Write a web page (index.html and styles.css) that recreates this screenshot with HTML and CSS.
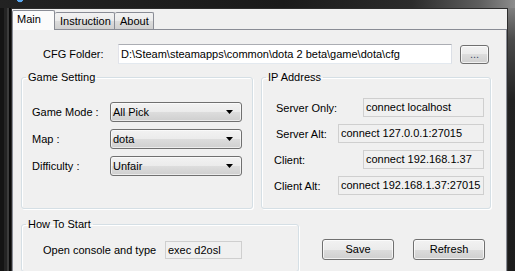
FILE: index.html
```html
<!DOCTYPE html>
<html>
<head>
<meta charset="utf-8">
<link rel="stylesheet" href="styles.css">
</head>
<body>
<div class="window">
  <div class="client">
    <div class="tabs">
      <div class="tab active">Main</div>
      <div class="tab">Instruction</div>
      <div class="tab">About</div>
    </div>
    <div class="page">
      <div class="cfg-row">
        <span class="cfg-label">CFG Folder:</span>
        <div class="textbox cfg-path">D:\Steam\steamapps\common\dota 2 beta\game\dota\cfg</div>
        <div class="btn btn-browse">...</div>
      </div>
      <div class="groups">
        <fieldset class="group game">
          <legend>Game Setting</legend>
          <div class="group-body game-body">
            <div class="field-row">
              <span class="flabel">Game Mode :</span>
              <div class="combo"><span>All Pick</span><svg class="arrow" width="7" height="4" viewBox="0 0 7 4"><path d="M0 0H7L3.5 4Z"/></svg></div>
            </div>
            <div class="field-row">
              <span class="flabel">Map :</span>
              <div class="combo"><span>dota</span><svg class="arrow" width="7" height="4" viewBox="0 0 7 4"><path d="M0 0H7L3.5 4Z"/></svg></div>
            </div>
            <div class="field-row">
              <span class="flabel">Difficulty :</span>
              <div class="combo"><span>Unfair</span><svg class="arrow" width="7" height="4" viewBox="0 0 7 4"><path d="M0 0H7L3.5 4Z"/></svg></div>
            </div>
          </div>
        </fieldset>
        <fieldset class="group ip">
          <legend>IP Address</legend>
          <div class="group-body ip-body">
            <div class="ip-row">
              <span class="ilabel">Server Only:</span>
              <div class="rbox short">connect localhost</div>
            </div>
            <div class="ip-row">
              <span class="ilabel">Server Alt:</span>
              <div class="rbox long">connect 127.0.0.1:27015</div>
            </div>
            <div class="ip-row">
              <span class="ilabel alt">Client:</span>
              <div class="rbox short">connect 192.168.1.37</div>
            </div>
            <div class="ip-row">
              <span class="ilabel alt">Client Alt:</span>
              <div class="rbox long">connect 192.168.1.37:27015</div>
            </div>
          </div>
        </fieldset>
      </div>
      <div class="bottom-row">
        <fieldset class="group start">
          <legend>How To Start</legend>
          <div class="group-body start-body">
            <span class="slabel">Open console and type</span>
            <div class="rbox cmd">exec d2osl</div>
          </div>
        </fieldset>
        <div class="actions">
          <div class="btn action">Save</div>
          <div class="btn action">Refresh</div>
        </div>
      </div>
    </div>
  </div>
</div>
</body>
</html>
```

FILE: styles.css
```css
* { box-sizing: border-box; }

html, body {
  margin: 0;
  padding: 0;
}

body {
  width: 515px;
  height: 271px;
  overflow: hidden;
  background: #1a1a1a;
  font-family: "Liberation Sans", Arial, sans-serif;
  font-size: 11px;
  color: #000;
}

.window {
  height: 271px;
  display: flex;
  flex-direction: column;
  padding: 8px 7px 0 11px;
  background:
    radial-gradient(circle at 20px -1px, #5aa8f0 0 3px, transparent 3.6px),
    linear-gradient(90deg, #222 0%, #1a1a1a 55%, #2c2c2c 80%, #5e5e5e 93%, #8c8c8c 100%) top / 100% 8px no-repeat,
    linear-gradient(90deg, #141414 0 4px, #242424 4px 7px, #3c3c3c 7px 9px, #0a0a0a 9px 11px) left / 11px 100% no-repeat,
    linear-gradient(180deg, #8c8c8c 0, #4a4a4a 40px, #222 100px, #1c1c1c 100%) right / 7px 100% no-repeat,
    #1a1a1a;
}

.client {
  flex: 1;
  display: flex;
  flex-direction: column;
  background: #f0f0f0;
  border: 1px solid #2c2c2c;
  border-bottom: 0;
  padding-top: 1px;
  overflow: hidden;
}

/* Tabs */
.tabs {
  display: flex;
  align-items: flex-end;
  height: 19px;
  position: relative;
  z-index: 1;
}

.tab {
  height: 17px;
  padding: 0 5px;
  border: 1px solid #898c95;
  border-bottom: 0;
  border-left-width: 0;
  background: linear-gradient(#f2f2f2 0%, #ebebeb 50%, #dddddd 50%, #cfcfcf 100%);
  line-height: 16px;
  border-radius: 2px 2px 0 0;
}

.tab:nth-child(2) { width: 60px; }
.tab:nth-child(3) { width: 39px; }

.tab.active {
  width: 43px;
  height: 20px;
  margin-bottom: -1px;
  border-left-width: 1px;
  border-right-width: 1px;
  background: #fbfbfb;
  line-height: 17px;
  padding-left: 4px;
}

.tab.active + .tab { border-left-width: 0; }

/* Page */
.page {
  flex: 1;
  border: 1px solid #898c95;
  border-bottom: 0;
  background: #f0f0f0;
  padding: 14px 0 0 8px;
}

.cfg-row {
  display: flex;
  align-items: flex-start;
  height: 20px;
}

.cfg-label {
  width: 75px;
  margin-left: 22px;
  line-height: 20px;
}

.textbox {
  height: 20px;
  border: 1px solid #abadb3;
  border-color: #abadb3 #dbdfe6 #e3e9ef #e2e3ea;
  background: #fff;
  line-height: 18px;
  padding-left: 2px;
  white-space: nowrap;
  overflow: hidden;
}

.cfg-path { width: 334px; }

.btn {
  border: 1px solid #707070;
  border-radius: 3px;
  background: linear-gradient(#f2f2f2 0%, #ebebeb 50%, #dddddd 50%, #cfcfcf 100%);
  box-shadow: inset 0 0 0 1px rgba(255, 255, 255, 0.7);
  text-align: center;
}

.btn-browse {
  width: 29px;
  height: 19px;
  margin-top: 1px;
  margin-left: 8px;
  line-height: 17px;
  color: #3a4a6a;
}

/* Groups */
.group {
  margin: 0;
  padding: 0;
  min-width: 0;
  border: 1px solid #d5dfe5;
  border-radius: 3px;
  box-shadow: inset 1px 1px 0 #fff, 1px 1px 0 #fff;
}

.group legend {
  padding: 0 2px;
  margin-left: 4px;
  line-height: 13px;
}

.groups {
  display: flex;
  gap: 8px;
  margin-top: 7px;
}

.game {
  width: 232px;
  height: 138px;
}

.game-body {
  display: flex;
  flex-direction: column;
  gap: 7px;
  padding: 18px 0 0 10px;
}

.field-row {
  display: flex;
  align-items: center;
  height: 20px;
}

.flabel {
  width: 78px;
}

.combo {
  width: 132px;
  height: 20px;
  border: 1px solid #707070;
  border-radius: 3px;
  background: linear-gradient(#f2f2f2 0%, #ebebeb 50%, #dddddd 50%, #cfcfcf 100%);
  box-shadow: inset 0 0 0 1px rgba(255, 255, 255, 0.6);
  display: flex;
  align-items: center;
  justify-content: space-between;
  padding: 0 8px 0 2px;
}

.arrow { fill: #000; }

.ip {
  width: 230px;
  height: 138px;
}

.ip-body {
  display: flex;
  flex-direction: column;
  gap: 7px;
  padding: 14px 6px 0 14px;
}

.ip-row {
  display: flex;
  align-items: center;
  justify-content: space-between;
  height: 19px;
}

.ilabel.alt { margin-left: -2px; }

.rbox {
  height: 19px;
  border: 1px solid #cfcfcf;
  background: #f0f0f0;
  line-height: 17px;
  padding-left: 2px;
  white-space: nowrap;
}

.rbox.short { width: 121px; }
.rbox.long { width: 146px; }

.bottom-row {
  display: flex;
  align-items: flex-start;
  margin-top: 9px;
}

.start {
  width: 278px;
  height: 54px;
}

.start-body {
  display: flex;
  align-items: center;
  padding: 10px 0 0 21px;
}

.slabel { width: 122px; }

.rbox.cmd {
  width: 77px;
  height: 18px;
  line-height: 16px;
}

.actions {
  display: flex;
  gap: 19px;
  margin-left: 23px;
  margin-top: 21px;
}

.btn.action {
  width: 72px;
  height: 21px;
  line-height: 19px;
}
```
